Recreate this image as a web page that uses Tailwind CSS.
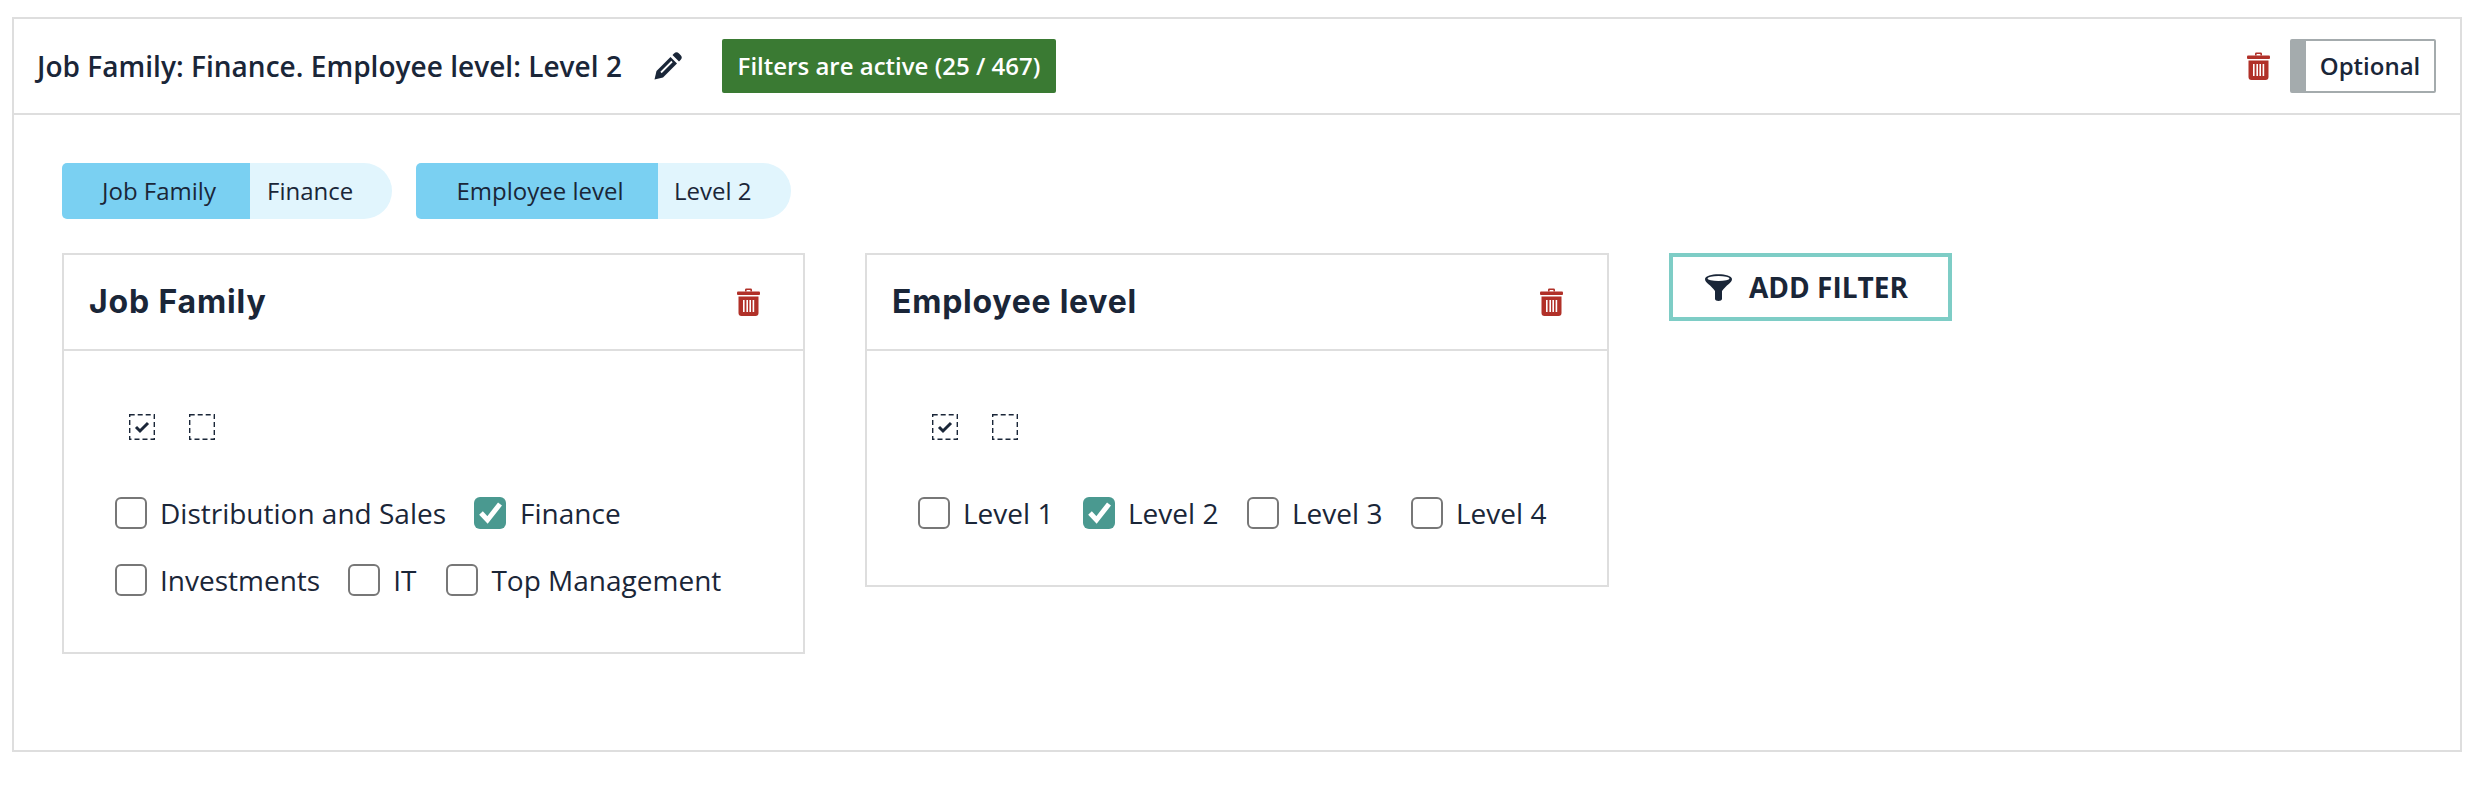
<!DOCTYPE html>
<html lang="en">
<head>
    <meta charset="UTF-8">
    <title>Filters</title>
    <script src="https://cdn.jsdelivr.net/npm/@tailwindcss/browser@4"></script>
</head>
<body class="bg-white text-[#1a2638] font-['Open_Sans',sans-serif]">
    <div class="ml-3 mt-[17px] w-[2450px] h-[735px] border-2 border-[#dedede]">
        <!-- segment header -->
        <div class="h-[96px] border-b-2 border-[#dedede] pl-[23px] pr-[24px] flex items-center">
            <span class="text-[28px] font-semibold leading-none tracking-[0.03px]">Job Family: Finance. Employee level: Level 2</span>
            <svg class="ml-[32px] w-[28px] h-[28px]" viewBox="0 0 28 28">
                <path d="M0.5 27.5 L2.5 19 L16.5 5 L23 11.5 L9 25.5 Z" fill="#1a2638"/>
                <path d="M7 20.5 L18 9.5" stroke="#fff" stroke-width="1.8"/>
                <path d="M18.5 3 L20 1.5 a3.5 3.5 0 0 1 5 0 l1.5 1.5 a3.5 3.5 0 0 1 0 5 L25 9.5 Z" fill="#1a2638"/>
            </svg>
            <span class="ml-[40px] w-[334px] h-[54px] bg-[#3a7a33] rounded-[2px] text-white text-[24px] font-semibold flex items-center justify-center">Filters are active (25 / 467)</span>
            <svg class="ml-auto w-[23px] h-[28px]" viewBox="0 0 23 28" fill="#b13129">
                <path d="M8 3.5 V1.8 A1.3 1.3 0 0 1 9.3 .5 h4.4 A1.3 1.3 0 0 1 15 1.8 V3.5 h-1.6 V2 h-3.8 v1.5 Z"/>
                <rect x="0" y="3.5" width="23" height="3.5" rx="1"/>
                <path fill-rule="evenodd" d="M1.5 8.5 h20 V25 a3 3 0 0 1-3 3 h-14 a3 3 0 0 1-3-3 Z M6 12 v12 h1.6 V12 Z M9.4 12 v12 H11 V12 Z M12.4 12 v12 H14 V12 Z M15.6 12 v12 h1.6 V12 Z"/>
            </svg>
            <div class="ml-[20px] w-[146px] h-[54px] border-2 border-[#a4abad] border-l-[16px] rounded-[2px] flex items-center justify-center text-[24px] font-semibold">Optional</div>
        </div>

        <div class="pt-[48px] pl-[48px]">
            <!-- active filter pills -->
            <div class="flex gap-[24px] text-[24px]">
                <div class="flex h-[56px]">
                    <span class="w-[188px] bg-[#7ad0f2] rounded-l-[5px] flex items-center justify-center pl-[6px]">Job Family</span>
                    <span class="w-[142px] bg-[#e1f5fd] rounded-r-[28px] pl-[17px] flex items-center">Finance</span>
                </div>
                <div class="flex h-[56px]">
                    <span class="w-[242px] bg-[#7ad0f2] rounded-l-[5px] flex items-center justify-center pl-[6px]">Employee level</span>
                    <span class="w-[133px] bg-[#e1f5fd] rounded-r-[28px] pl-[16px] flex items-center">Level 2</span>
                </div>
            </div>

            <div class="mt-[34px] flex items-start">
                <!-- Job Family -->
                <div class="w-[743px] h-[401px] border-2 border-[#dedede]">
                    <div class="h-[96px] border-b-2 border-[#dedede] pl-[25px] pr-[43px] flex items-center justify-between">
                        <span class="text-[32px] font-['Inter',sans-serif] font-bold tracking-[0.85px]">Job Family</span>
                        <svg class="w-[23px] h-[28px]" viewBox="0 0 23 28" fill="#b13129">
                            <path d="M8 3.5 V1.8 A1.3 1.3 0 0 1 9.3 .5 h4.4 A1.3 1.3 0 0 1 15 1.8 V3.5 h-1.6 V2 h-3.8 v1.5 Z"/>
                            <rect x="0" y="3.5" width="23" height="3.5" rx="1"/>
                            <path fill-rule="evenodd" d="M1.5 8.5 h20 V25 a3 3 0 0 1-3 3 h-14 a3 3 0 0 1-3-3 Z M6 12 v12 h1.6 V12 Z M9.4 12 v12 H11 V12 Z M12.4 12 v12 H14 V12 Z M15.6 12 v12 h1.6 V12 Z"/>
                        </svg>
                    </div>
                    <div class="pl-[51px]">
                        <div class="pl-[14px] pt-[63px] flex gap-[34px]">
                            <div class="relative w-[26px] h-[26px] flex items-center justify-center">
                                <svg class="absolute inset-0" width="26" height="26" fill="none" stroke="#1a2638" stroke-width="1.4" stroke-dasharray="5 3"><rect x=".7" y=".7" width="24.6" height="24.6"/></svg>
                                <svg class="w-[16px] h-[14px]" viewBox="0 0 16 14" fill="none" stroke="#1a2638" stroke-width="3"><path d="M2 7 L6 11 L14 3"/></svg>
                            </div>
                            <svg width="26" height="26" fill="none" stroke="#1a2638" stroke-width="1.4" stroke-dasharray="5 3"><rect x=".7" y=".7" width="24.6" height="24.6"/></svg>
                        </div>
                        <div class="mt-[57px] flex flex-col gap-[35px] text-[28px] leading-[32px]">
                            <div class="flex">
                                <div class="w-[32px] h-[32px] border-2 border-[#777] rounded-[6px]"></div>
                                <span class="ml-[13px]">Distribution and Sales</span>
                                <div class="ml-[28px] w-[32px] h-[32px] bg-[#4a9990] rounded-[6px]">
                                    <svg class="w-[32px] h-[32px]" viewBox="0 0 32 32" fill="none" stroke="#fff" stroke-width="5"><path d="M7 16 L13.5 23 L26 7"/></svg>
                                </div>
                                <span class="ml-[14px]">Finance</span>
                            </div>
                            <div class="flex">
                                <div class="w-[32px] h-[32px] border-2 border-[#777] rounded-[6px]"></div>
                                <span class="ml-[13px]">Investments</span>
                                <div class="ml-[28px] w-[32px] h-[32px] border-2 border-[#777] rounded-[6px]"></div>
                                <span class="ml-[13px]">IT</span>
                                <div class="ml-[30px] w-[32px] h-[32px] border-2 border-[#777] rounded-[6px]"></div>
                                <span class="ml-[13px]">Top Management</span>
                            </div>
                        </div>
                    </div>
                </div>

                <!-- Employee level -->
                <div class="ml-[60px] w-[744px] h-[334px] border-2 border-[#dedede]">
                    <div class="h-[96px] border-b-2 border-[#dedede] pl-[25px] pr-[44px] flex items-center justify-between">
                        <span class="text-[32px] font-['Inter',sans-serif] font-bold tracking-[0.75px]">Employee level</span>
                        <svg class="w-[23px] h-[28px]" viewBox="0 0 23 28" fill="#b13129">
                            <path d="M8 3.5 V1.8 A1.3 1.3 0 0 1 9.3 .5 h4.4 A1.3 1.3 0 0 1 15 1.8 V3.5 h-1.6 V2 h-3.8 v1.5 Z"/>
                            <rect x="0" y="3.5" width="23" height="3.5" rx="1"/>
                            <path fill-rule="evenodd" d="M1.5 8.5 h20 V25 a3 3 0 0 1-3 3 h-14 a3 3 0 0 1-3-3 Z M6 12 v12 h1.6 V12 Z M9.4 12 v12 H11 V12 Z M12.4 12 v12 H14 V12 Z M15.6 12 v12 h1.6 V12 Z"/>
                        </svg>
                    </div>
                    <div class="pl-[51px]">
                        <div class="pl-[14px] pt-[63px] flex gap-[34px]">
                            <div class="relative w-[26px] h-[26px] flex items-center justify-center">
                                <svg class="absolute inset-0" width="26" height="26" fill="none" stroke="#1a2638" stroke-width="1.4" stroke-dasharray="5 3"><rect x=".7" y=".7" width="24.6" height="24.6"/></svg>
                                <svg class="w-[16px] h-[14px]" viewBox="0 0 16 14" fill="none" stroke="#1a2638" stroke-width="3"><path d="M2 7 L6 11 L14 3"/></svg>
                            </div>
                            <svg width="26" height="26" fill="none" stroke="#1a2638" stroke-width="1.4" stroke-dasharray="5 3"><rect x=".7" y=".7" width="24.6" height="24.6"/></svg>
                        </div>
                        <div class="mt-[57px] flex text-[28px] leading-[32px]">
                            <div class="w-[32px] h-[32px] border-2 border-[#777] rounded-[6px]"></div>
                            <span class="ml-[13px] w-[120px]">Level 1</span>
                            <div class="w-[32px] h-[32px] bg-[#4a9990] rounded-[6px]">
                                <svg class="w-[32px] h-[32px]" viewBox="0 0 32 32" fill="none" stroke="#fff" stroke-width="5"><path d="M7 16 L13.5 23 L26 7"/></svg>
                            </div>
                            <span class="ml-[13px] w-[119px]">Level 2</span>
                            <div class="w-[32px] h-[32px] border-2 border-[#777] rounded-[6px]"></div>
                            <span class="ml-[13px] w-[119px]">Level 3</span>
                            <div class="w-[32px] h-[32px] border-2 border-[#777] rounded-[6px]"></div>
                            <span class="ml-[13px]">Level 4</span>
                        </div>
                    </div>
                </div>

                <!-- add filter -->
                <button class="ml-[60px] w-[283px] h-[68px] border-4 border-[#7ecdc6] flex items-center pl-[32px] text-[28px] font-bold">
                    <svg class="w-[27px] h-[27px]" viewBox="0 0 27 27" fill="#1a2638">
                        <path d="M0 5 C0 -1.5 27 -1.5 27 5 C27 9 21 11 17 17 V25 C17 27.5 10 27.5 10 25 V17 C6 11 0 9 0 5 Z"/>
                        <ellipse cx="13.5" cy="4.5" rx="11" ry="2.5" fill="#fff"/>
                    </svg>
                    <span class="ml-[17px]">ADD FILTER</span>
                </button>
            </div>
        </div>
    </div>
</body>
</html>
